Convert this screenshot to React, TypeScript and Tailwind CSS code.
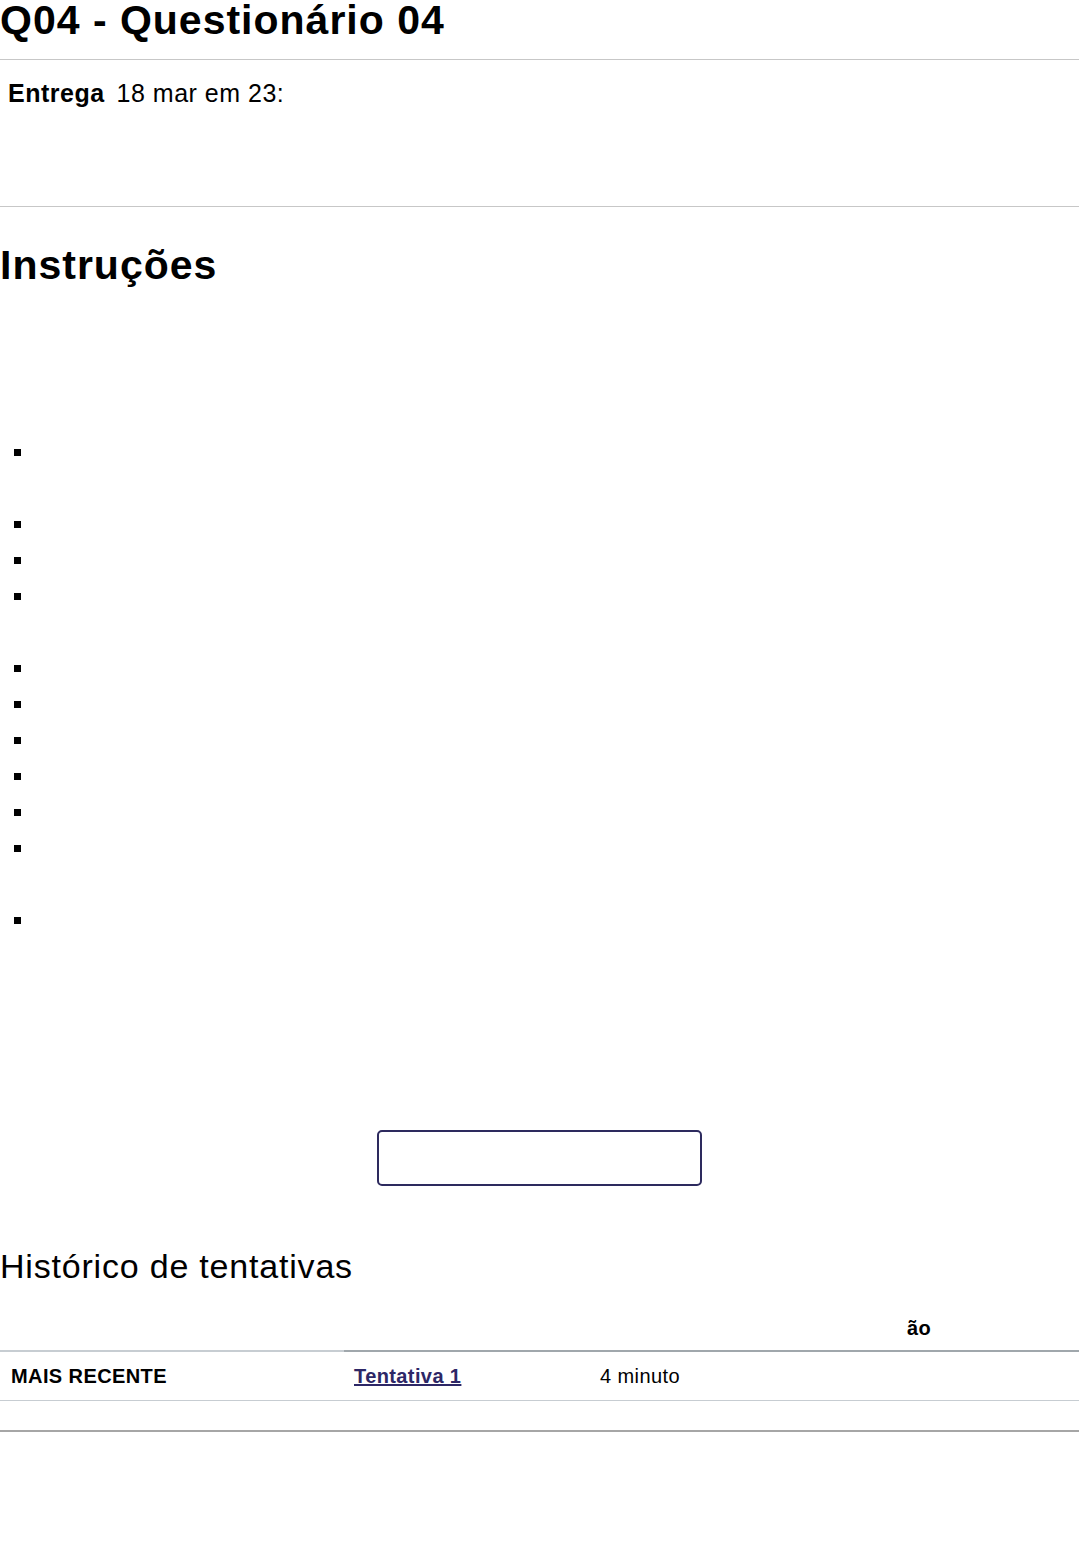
import React from "react";

const rows: boolean[] = [true, false, true, true, true, false, true, true, true, true, true, true, false, true];

export default function App() {
  return (
    <div className="w-[1079px] min-h-[1557px] bg-white text-black font-['Liberation_Sans',Arial,sans-serif]">
      <h1 className="text-[41px] leading-[40px] font-bold tracking-[1px] whitespace-nowrap">
        Q04 - Questionário 04
      </h1>
      <div className="mt-[19px] h-px bg-[#c7c7c7]" />
      <div className="pt-[18px] h-[146px] pl-[8px] text-[25px] leading-[30px] tracking-[0.5px] whitespace-nowrap">
        <span className="font-bold">Entrega</span>
        <span className="ml-[12px]">18 mar em 23:</span>
      </div>
      <div className="h-px bg-[#c7c7c7]" />
      <h2 className="mt-[39px] text-[41px] leading-[38px] font-bold tracking-[1px]">Instruções</h2>
      <ul className="mt-[150px]">
        {rows.map((b, i) => (
          <li key={i} className="h-[36px] flex items-center pl-[14px]">
            {b && <span className="block w-[7px] h-[7px] bg-black" />}
          </li>
        ))}
      </ul>
      <div className="mt-[192px] flex justify-center">
        <button className="w-[325px] h-[56px] border-2 border-[#2d2a5e] rounded-[5px] bg-white" />
      </div>
      <h2 className="mt-[62px] text-[34px] leading-[36px] tracking-[0.8px] whitespace-nowrap">
        Histórico de tentativas
      </h2>
      <div className="mt-[32px] text-[20px] leading-[24px] tracking-[0.4px]">
        <div className="flex">
          <div className="w-[344px] pb-[10px] border-b-2 border-[#c7cdd2] h-[36px]" />
          <div className="flex-1 flex border-b-2 border-[#a0a7ac] pb-[10px]">
            <div className="w-[553px]" />
            <div className="pl-[10px] font-bold">ão</div>
          </div>
        </div>
        <div className="flex h-[49px] items-center border-b border-[#c7cdd2]">
          <div className="w-[344px] pl-[11px] font-bold">MAIS RECENTE</div>
          <div className="w-[246px] pl-[10px]">
            <a href="#" className="font-bold text-[#2d2766] underline">Tentativa 1</a>
          </div>
          <div className="pl-[10px]">4 minuto</div>
        </div>
        <div className="h-[31px] border-b-2 border-[#a6a6a6]" />
      </div>
    </div>
  );
}
